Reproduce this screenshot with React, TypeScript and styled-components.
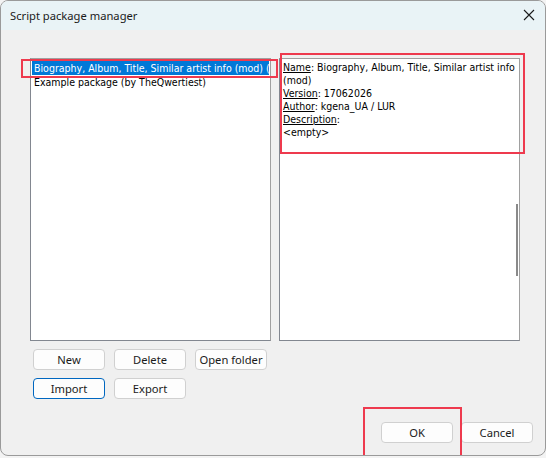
import styled, { createGlobalStyle } from 'styled-components'

const Global = createGlobalStyle`
  html, body {
    margin: 0;
    padding: 0;
    background: #f3f3f3;
  }
`

const Window = styled.div`
  position: relative;
  box-sizing: border-box;
  width: 546px;
  height: 456px;
  border: 1px solid #9a9a9a;
  border-radius: 8px;
  background: #f0f0f0;
  overflow: hidden;
  display: flex;
  flex-direction: column;
  font-family: 'Noto Sans', 'Liberation Sans', sans-serif;
`

const TitleBar = styled.div`
  height: 28px;
  background: #e9f3f6;
  display: flex;
  align-items: center;
  justify-content: space-between;
  padding: 0 9px 1px 9px;
  font-size: 11.2px;
  color: #1a1a1a;
`

const CloseIcon = styled.svg`
  width: 12px;
  height: 12px;
  margin-right: 1px;
`

const Body = styled.div`
  flex: 1;
  display: flex;
  flex-direction: column;
  padding: 28px 0 0 29px;
`

const Panels = styled.div`
  display: flex;
  gap: 8px;
  height: 283px;
`

const Pane = styled.div`
  box-sizing: border-box;
  position: relative;
  width: 241px;
  height: 100%;
  background: #fff;
  border: 1px solid #828790;
  border-color: #a0a0a0 #a0a0a0 #828790 #828790;
  padding: 2px 0 2px 1px;
  font-family: 'DejaVu Sans Condensed', 'Liberation Sans', Arial, sans-serif;
  font-size: 10.5px;
  line-height: 14px;
  color: #000;
  overflow: hidden;
`

const Item = styled.div<{ $selected?: boolean }>`
  height: 14px;
  margin-right: 1px;
  padding-left: 2px;
  white-space: nowrap;
  overflow: hidden;
  background: ${({ $selected }) => ($selected ? '#0078d7' : 'transparent')};
  color: ${({ $selected }) => ($selected ? '#fff' : '#000')};
`

const Info = styled.div`
  padding: 0 0 0 2px;
  line-height: 13px;
`

const Label = styled.span`
  text-decoration: underline;
`

const ScrollThumb = styled.div`
  position: absolute;
  right: 1px;
  top: 145px;
  width: 2px;
  height: 72px;
  background: #8a8a8a;
`

const ButtonGrid = styled.div`
  display: grid;
  grid-template-columns: repeat(3, 72px);
  column-gap: 9px;
  row-gap: 8px;
  margin: 8px 0 0 3px;
`

const Button = styled.button<{ $focused?: boolean }>`
  box-sizing: border-box;
  height: 21px;
  width: 72px;
  padding: 0;
  background: #fdfdfd;
  border: 1px solid ${({ $focused }) => ($focused ? '#0067c0' : '#d0d0d0')};
  border-radius: 4px;
  font-family: 'Noto Sans', 'Liberation Sans', sans-serif;
  font-size: 11.2px;
  color: #1a1a1a;
`

const Footer = styled.div`
  display: flex;
  justify-content: flex-end;
  gap: 8px;
  padding: 0 12px 0 0;
  margin-top: 23px;
`

const Marker = styled.div<{ $x: number; $y: number; $w: number; $h: number }>`
  position: absolute;
  left: ${({ $x }) => $x}px;
  top: ${({ $y }) => $y}px;
  width: ${({ $w }) => $w}px;
  height: ${({ $h }) => $h}px;
  border: 2px solid #ee3a4e;
  box-sizing: border-box;
  pointer-events: none;
`

const App = () => (
  <>
    <Global />
    <Window>
      <TitleBar>
        <span>Script package manager</span>
        <CloseIcon viewBox="0 0 12 12">
          <path d="M1 1 L11 11 M11 1 L1 11" stroke="#1a1a1a" strokeWidth="1.1" fill="none" />
        </CloseIcon>
      </TitleBar>
      <Body>
        <Panels>
          <Pane>
            <Item $selected>Biography, Album, Title, Similar artist info (mod) (by kgena_UA / LUR)</Item>
            <Item>Example package (by TheQwertiest)</Item>
          </Pane>
          <Pane>
            <Info>
              <div>
                <Label>Name</Label>: Biography, Album, Title, Similar artist info (mod)
              </div>
              <div>
                <Label>Version</Label>: 17062026
              </div>
              <div>
                <Label>Author</Label>: kgena_UA / LUR
              </div>
              <div>
                <Label>Description</Label>:
              </div>
              <div>&lt;empty&gt;</div>
            </Info>
            <ScrollThumb />
          </Pane>
        </Panels>
        <ButtonGrid>
          <Button>New</Button>
          <Button>Delete</Button>
          <Button>Open folder</Button>
          <Button $focused>Import</Button>
          <Button>Export</Button>
        </ButtonGrid>
        <Footer>
          <Button>OK</Button>
          <Button>Cancel</Button>
        </Footer>
      </Body>
      <Marker $x={20} $y={58} $w={257} $h={19} />
      <Marker $x={279} $y={52} $w={245} $h={101} />
      <Marker $x={362} $y={406} $w={99} $h={52} />
    </Window>
  </>
)

export default App
